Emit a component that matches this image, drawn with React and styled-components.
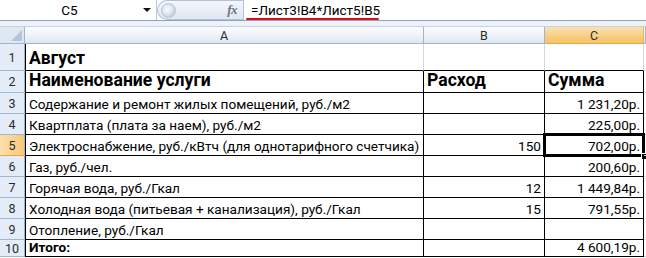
import styled, { createGlobalStyle } from "styled-components";

const GlobalStyle = createGlobalStyle`
  html, body {
    margin: 0;
    padding: 0;
    background: #ffffff;
  }
  body {
    font-family: Roboto, "Noto Sans", Arial, sans-serif;
    color: #000;
    overflow: hidden;
  }
`;

const COLS = "25px 399px 121px 99px 2px";

const Sheet = styled.div`
  width: 646px;
  height: 258px;
  overflow: hidden;
  background: #ffffff;
`;

const FormulaBar = styled.div`
  display: flex;
  height: 20px;
  border-bottom: 1px solid #8ea3be;
  background: #ffffff;
`;

const NameBox = styled.div`
  width: 157px;
  display: flex;
  align-items: center;
  border-right: 1px solid #b9c7d9;
  box-sizing: border-box;
`;

const NameText = styled.span`
  flex: 1;
  text-align: center;
  font-size: 13.5px;
  margin-right: 4px;
`;

const DropArrow = styled.span`
  width: 0;
  height: 0;
  margin-right: 5px;
  border-left: 4px solid transparent;
  border-right: 4px solid transparent;
  border-top: 4px solid #111;
`;

const Pill = styled.div`
  width: 86px;
  display: flex;
  align-items: center;
  justify-content: space-between;
  padding: 0 6px 0 3px;
  box-sizing: border-box;
  background: linear-gradient(#f4f7fb, #dfe7f2);
  border-radius: 10px 0 0 10px;
  border: 1px solid #b3c2d6;
  border-right: none;
`;

const Knob = styled.span`
  width: 15px;
  height: 15px;
  border-radius: 50%;
  background: radial-gradient(circle at 40% 40%, #ffffff 0, #d4dde9 55%, #aab7c8 100%);
  border: 1px solid #b6c3d4;
  box-sizing: border-box;
`;

const Fx = styled.span`
  font-family: "Liberation Serif", "DejaVu Serif", serif;
  font-style: italic;
  font-weight: bold;
  font-size: 13px;
  color: #6b7380;
  letter-spacing: -0.5px;
`;

const FormulaInput = styled.div`
  flex: 1;
  position: relative;
  display: flex;
  align-items: center;
  padding-left: 7px;
  border-left: 1px solid #b3c2d6;
  font-size: 13.5px;
`;

const RedMark = styled.span`
  position: absolute;
  left: 2px;
  top: 18px;
  width: 133px;
  height: 2px;
  background: #d6111c;
  border-radius: 2px;
`;

const Spacer = styled.div`
  height: 5px;
  background: #eef2f8;
  border-bottom: 1px solid #c5d1e0;
`;

const Grid = styled.div`
  display: grid;
  grid-template-columns: ${COLS};
`;

const Corner = styled.div`
  height: 17px;
  background: #dfe7f2;
  border-right: 1px solid #9eb6ce;
  border-bottom: 1px solid #9eb6ce;
  box-sizing: border-box;
  display: flex;
  align-items: flex-end;
  justify-content: flex-end;
  padding: 0 2px 2px 0;
`;

const CornerMark = styled.span`
  width: 0;
  height: 0;
  border-left: 11px solid transparent;
  border-bottom: 11px solid #b4c4d9;
`;

const ColHead = styled.div`
  height: 17px;
  box-sizing: border-box;
  display: flex;
  align-items: center;
  justify-content: center;
  font-size: 12.5px;
  color: #2b2b2b;
  border-right: 1px solid ${(p) => (p.$active ? "#f2b24e" : "#9eb6ce")};
  border-bottom: 1px solid ${(p) => (p.$active ? "#e8a73c" : "#9eb6ce")};
  background: ${(p) =>
    p.$active
      ? "linear-gradient(#fbe2b2, #f8cf84 55%, #f6c26a)"
      : "linear-gradient(#fafcfe, #eef2f8 55%, #dfe6f0)"};
`;

const RowHead = styled.div`
  height: ${(p) => p.$h}px;
  box-sizing: border-box;
  display: flex;
  align-items: center;
  justify-content: center;
  font-size: 12.5px;
  color: #2b2b2b;
  border-right: 1px solid #9eb6ce;
  border-bottom: 1px solid ${(p) => (p.$active ? "#e8a73c" : "#9eb6ce")};
  background: ${(p) =>
    p.$active ? "linear-gradient(90deg, #fbe0ad, #f7c877)" : "#e4ecf7"};
`;

const Cell = styled.div`
  position: relative;
  height: ${(p) => p.$h}px;
  box-sizing: border-box;
  display: flex;
  align-items: flex-end;
  justify-content: ${(p) => (p.$right ? "flex-end" : "flex-start")};
  padding: 0 3px ${(p) => (p.$big ? 1 : 0)}px 3px;
  white-space: nowrap;
  overflow: visible;
  font-size: ${(p) => (p.$big ? "17.6px" : "13.6px")};
  font-weight: ${(p) => (p.$bold ? 700 : 400)};
  line-height: ${(p) => (p.$big ? "21px" : "18px")};
  border-left: ${(p) => (p.$first ? "1px solid #000" : "none")};
  border-right: 1px solid ${(p) => (p.$ruled ? "#000" : "#d0d7e5")};
  border-bottom: 1px solid ${(p) => (p.$ruledBottom ? "#000" : "#d0d7e5")};
`;

const Selection = styled.span`
  position: absolute;
  left: -2px;
  top: -2px;
  right: -2px;
  bottom: -2px;
  border: 3px double #000;
  pointer-events: none;
`;

const FillHandle = styled.span`
  position: absolute;
  right: -5px;
  bottom: -5px;
  width: 5px;
  height: 5px;
  background: #000;
  border: 1px solid #fff;
`;

const rows = [
  { n: 1, h: 27, a: "Август", big: true },
  { n: 2, h: 22, a: "Наименование услуги", b: "Расход", c: "Сумма", big: true, head: true },
  { n: 3, h: 21, a: "Содержание и ремонт жилых помещений, руб./м2", c: "1 231,20р." },
  { n: 4, h: 21, a: "Квартплата (плата за наем), руб./м2", c: "225,00р." },
  { n: 5, h: 21, a: "Электроснабжение, руб./кВтч (для однотарифного счетчика)", b: "150", c: "702,00р.", active: true },
  { n: 6, h: 21, a: "Газ, руб./чел.", c: "200,60р." },
  { n: 7, h: 21, a: "Горячая вода, руб./Гкал", b: "12", c: "1 449,84р." },
  { n: 8, h: 21, a: "Холодная вода (питьевая + канализация), руб./Гкал", b: "15", c: "791,55р." },
  { n: 9, h: 21, a: "Отопление, руб./Гкал" },
  { n: 10, h: 17, a: "Итого:", c: "4 600,19р.", total: true },
];

export default function App() {
  return (
    <Sheet>
      <GlobalStyle />
      <FormulaBar>
        <NameBox>
          <NameText>C5</NameText>
          <DropArrow />
        </NameBox>
        <Pill>
          <Knob />
          <Fx>fx</Fx>
        </Pill>
        <FormulaInput>
          =Лист3!В4*Лист5!В5
          <RedMark />
        </FormulaInput>
      </FormulaBar>
      <Spacer />
      <Grid>
        <Corner>
          <CornerMark />
        </Corner>
        <ColHead>A</ColHead>
        <ColHead>B</ColHead>
        <ColHead $active>C</ColHead>
        <ColHead />
        {rows.map((r) => {
          const first = r.n === 1;
          return [
            <RowHead key={`h${r.n}`} $h={r.h} $active={r.active}>
              {r.n}
            </RowHead>,
            <Cell
              key={`a${r.n}`}
              $h={r.h}
              $first
              $ruled={!first}
              $ruledBottom
              $bold={r.big || r.total}
              $big={r.big}
            >
              {r.a}
            </Cell>,
            <Cell
              key={`b${r.n}`}
              $h={r.h}
              $ruled={!first}
              $ruledBottom
              $right={!r.head}
              $bold={r.head}
              $big={r.big}
            >
              {r.b}
            </Cell>,
            <Cell
              key={`c${r.n}`}
              $h={r.h}
              $ruled={!first}
              $ruledBottom
              $right={!r.head}
              $bold={r.head}
              $big={r.big}
            >
              {r.c}
              {r.active && (
                <>
                  <Selection />
                  <FillHandle />
                </>
              )}
            </Cell>,
            <Cell key={`d${r.n}`} $h={r.h} />,
          ];
        })}
      </Grid>
    </Sheet>
  );
}
